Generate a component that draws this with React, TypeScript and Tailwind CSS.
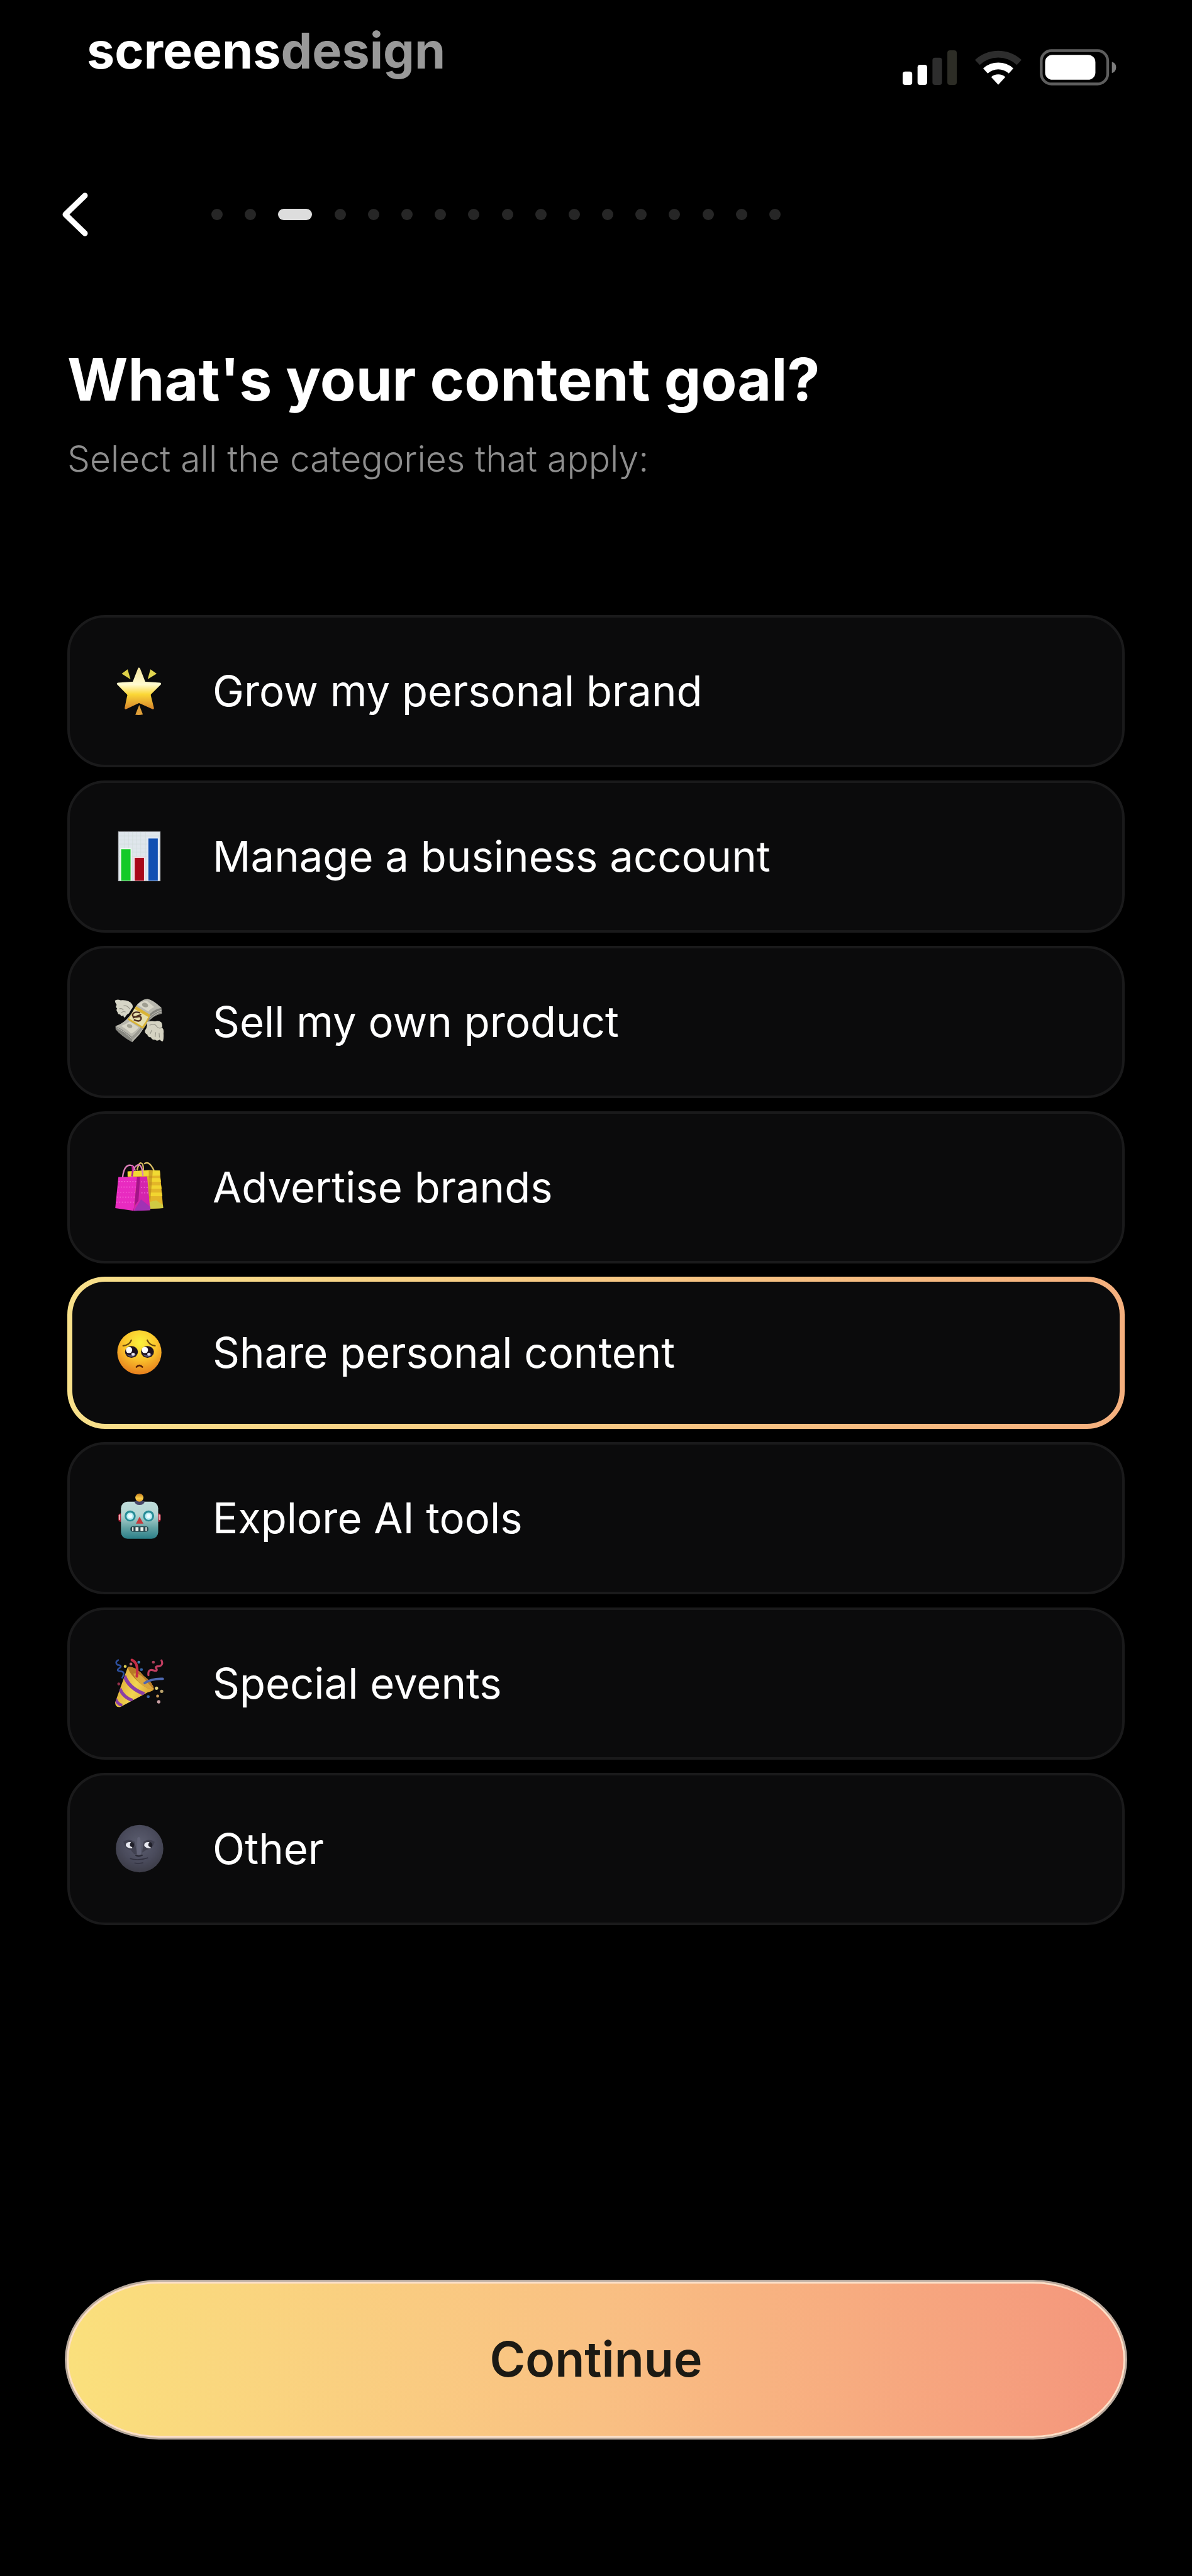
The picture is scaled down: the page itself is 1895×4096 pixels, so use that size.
import { useState } from "react";
import type { ReactNode } from "react";

type Goal = {
  id: string;
  label: string;
  icon: ReactNode;
};

function StarIcon() {
  return (
    <svg viewBox="75 84 280 280" className="size-[82px] shrink-0" aria-hidden="true">
      <defs>
        <linearGradient id="starBody" x1="0" y1="0" x2="0" y2="1">
          <stop offset="0" stopColor="#f7e7a0" />
          <stop offset="0.4" stopColor="#fffbd0" />
          <stop offset="0.65" stopColor="#fbd736" />
          <stop offset="1" stopColor="#d98a2c" />
        </linearGradient>
      </defs>
      <g strokeLinejoin="round">
        <path
          d="M215 102 L243 174 Q246 179 252 179 L329 184 L275 238 Q272 242 273 248 L290 316 L222 285 Q215 281 208 285 L143 316 L157 248 Q158 242 154 238 L101 184 L178 179 Q184 179 187 174 Z"
          fill="url(#starBody)"
          stroke="url(#starBody)"
          strokeWidth="12"
        />
        <path d="M121 129 L153 105 L169 160 Z" fill="#dcd048" />
        <path d="M277 105 L311 129 L262 159 Z" fill="#e2d650" />
        <path d="M216 299 L236 350 Q216 356 195 352 Z" fill="#e0a03a" />
      </g>
    </svg>
  );
}

function ChartIcon() {
  return (
    <svg viewBox="75 84 280 280" className="size-[82px] shrink-0" aria-hidden="true">
      <rect x="103" y="89" width="227" height="267" fill="#dfe6ec" stroke="#b9bcc0" strokeWidth="3" />
      <path
        d="M104 112H329M104 134H329M104 156H329M104 178H329M104 200H329M104 222H329M136 90V355M158 90V355M180 90V355M202 90V355M224 90V355M250 90V355"
        stroke="#cfdad9"
        strokeWidth="2"
      />
      <rect x="112" y="178" width="62" height="177" fill="#eefaf0" />
      <rect x="186" y="225" width="62" height="130" fill="#f8dce4" />
      <rect x="260" y="120" width="62" height="235" fill="#e3ecf8" />
      <rect x="118" y="184" width="51" height="171" fill="#14ca28" />
      <rect x="192" y="231" width="50" height="124" fill="#a80818" />
      <rect x="266" y="126" width="51" height="229" fill="#104fb2" />
    </svg>
  );
}

function MoneyIcon() {
  return (
    <svg viewBox="75 82 280 280" className="size-[82px] shrink-0" aria-hidden="true">
      <path d="M87 246 Q150 225 190 150 Q220 100 262 97 Q290 100 337 145 L339 178 Q295 185 262 225 L216 290 L178 332 Q120 300 88 262 Z" fill="#85857f" />
      <path d="M87 244 Q150 225 188 152 Q220 98 262 97 Q290 102 337 146 Q290 152 257 200 Q220 270 176 303 Q128 262 87 244 Z" fill="#b9b8ae" />
      <path d="M176 303 Q222 270 250 212 L262 225 L216 292 L178 332 Z" fill="#9b9a92" />
      <path d="M92 252 Q135 272 177 312M178 322 Q215 292 235 262M270 200 Q295 170 337 158M275 208 Q300 178 338 168" stroke="#cfcec6" strokeWidth="3" fill="none" />
      <path d="M118 243 Q150 232 165 219 L213 252 Q195 275 173 285 Q150 262 118 243 Z" fill="#d8d6c8" />
      <ellipse cx="164" cy="244" rx="15" ry="10" fill="#a3a294" transform="rotate(20 164 244)" />
      <path d="M205 128 Q228 110 258 108 L298 141 Q275 150 266 166 Z" fill="#d8d6c8" />
      <ellipse cx="248" cy="130" rx="17" ry="12" fill="#a09f92" transform="rotate(20 248 130)" />
      <path d="M199 137 L276 184 Q262 225 237 259 L153 209 Q178 178 199 137 Z" fill="#d9b335" />
      <path d="M190 151 L265 195 Q252 223 233 246 L161 203 Q180 178 190 151 Z" fill="#e6dfae" />
      <path d="M220 172 Q190 162 181 180 Q176 198 204 194 Q230 188 226 206 Q218 226 187 209M227 181 L181 200" fill="none" stroke="#4b2d1e" strokeWidth="8" />
      <path d="M84 106 Q96 96 115 104 Q160 100 178 126 Q186 142 174 152 L160 176 Q148 180 138 199 Q130 196 130 186 Q118 196 112 180 Q102 184 98 168 Q88 154 97 150 Q84 138 94 130 Q84 116 84 106 Z" fill="#d6d5c6" />
      <path d="M131 134 Q152 130 165 152M108 150 Q124 146 130 158M118 172 Q130 162 142 168" fill="none" stroke="#96958a" strokeWidth="4" />
      <path d="M258 222 Q282 214 302 219 Q322 212 336 224 Q344 238 340 252 Q352 264 348 284 Q350 312 345 326 Q336 330 328 318 Q312 330 302 318 Q286 322 280 306 Q262 304 260 290 Q244 282 247 268 Q262 252 258 222 Z" fill="#d5d3c2" />
      <path d="M272 240 Q300 226 312 248 Q330 262 339 250M276 286 L284 266M302 304 L306 278M326 306 L324 282" fill="none" stroke="#98978b" strokeWidth="4" />
    </svg>
  );
}

function BagsIcon() {
  return (
    <svg viewBox="75 80 280 280" className="size-[82px] shrink-0" aria-hidden="true">
      <path d="M153 134 L272 126 L328 129 L346 333 L265 336 L160 320 Z" fill="#e3b528" />
      <path d="M153 134 L272 127 L328 129 L330 156 L153 160 Z" fill="#f1da33" />
      <path d="M270 170H331L334 190H270ZM270 209H335L338 228H270ZM270 248H339L342 268H270Z" fill="#f2d52f" />
      <path d="M270 300 L308 290 L345 316 L346 333 L268 336 Z" fill="#cfca43" />
      <path d="M268 128 L290 128 L276 300 L268 270 Z" fill="#b8841f" opacity="0.6" />
      <path d="M204 128 Q214 84 226 88 Q240 90 238 128M243 92 Q270 72 296 128" fill="none" stroke="#d8bd63" strokeWidth="8" />
      <path d="M103 164 L204 162 L186 347 L86 333 Z" fill="#e82bc0" />
      <path d="M204 162 L259 161 L276 344 L186 347 Z" fill="#d424ad" />
      <path d="M204 162 L221 162 L212 292 L190 322 Z" fill="#a51389" />
      <path d="M188 347 L226 285 L276 326 L276 344 Z" fill="#a032b4" />
      <path d="M104 188H200M101 218H197M98 246H194M95 273H191M92 300H189M226 190H260M226 220H262M228 250H266" stroke="#f66ad8" strokeWidth="5" strokeDasharray="6 9" />
      <path d="M126 165 Q134 96 170 100 Q188 100 194 130M176 165 Q182 110 208 98 Q232 92 236 158" fill="none" stroke="#dc7fb8" strokeWidth="8" />
      <path d="M178 104 Q184 120 177 160" fill="none" stroke="#b81f92" strokeWidth="9" />
    </svg>
  );
}

function PleadingIcon() {
  return (
    <svg viewBox="75 78 280 280" className="size-[82px] shrink-0" aria-hidden="true">
      <defs>
        <radialGradient id="faceFill" cx="0.52" cy="0.28" r="0.75">
          <stop offset="0" stopColor="#fbf23c" />
          <stop offset="0.5" stopColor="#fbc42c" />
          <stop offset="1" stopColor="#e5791c" />
        </radialGradient>
      </defs>
      <circle cx="217" cy="216" r="120" fill="url(#faceFill)" />
      <path d="M129 180 Q162 177 173 150M260 150 Q271 177 302 180" fill="none" stroke="#6d4a0c" strokeWidth="8" strokeLinecap="round" />
      <ellipse cx="174" cy="213" rx="35" ry="32" fill="#1d1220" />
      <ellipse cx="261" cy="213" rx="35" ry="32" fill="#1d1220" />
      <path d="M146 226 Q174 256 203 224 Q180 238 146 226ZM233 226 Q261 256 290 224 Q266 238 233 226Z" fill="#5c5878" />
      <ellipse cx="161" cy="203" rx="17" ry="17" fill="#fff" />
      <ellipse cx="247" cy="203" rx="17" ry="17" fill="#fff" />
      <ellipse cx="183" cy="226" rx="9" ry="8" fill="#e8e4f0" />
      <ellipse cx="269" cy="226" rx="9" ry="8" fill="#e8e4f0" />
      <path d="M201 295 Q217 278 233 295" fill="none" stroke="#5a2107" strokeWidth="9" strokeLinecap="round" />
    </svg>
  );
}

function RobotIcon() {
  return (
    <svg viewBox="75 76 280 280" className="size-[82px] shrink-0" aria-hidden="true">
      <defs>
        <linearGradient id="robotHead" x1="0" y1="0" x2="0" y2="1">
          <stop offset="0" stopColor="#bfdcda" />
          <stop offset="0.35" stopColor="#b5d6d3" />
          <stop offset="0.7" stopColor="#64a3a4" />
          <stop offset="1" stopColor="#2b7f88" />
        </linearGradient>
        <linearGradient id="robotBulb" x1="0" y1="0" x2="0" y2="1">
          <stop offset="0" stopColor="#c47a1c" />
          <stop offset="0.6" stopColor="#fbd04a" />
          <stop offset="1" stopColor="#e8a02c" />
        </linearGradient>
      </defs>
      <rect x="103" y="190" width="230" height="46" rx="12" fill="#a81c30" />
      <rect x="105" y="196" width="8" height="30" rx="4" fill="#f0a0ac" />
      <rect x="323" y="196" width="8" height="30" rx="4" fill="#f0a0ac" />
      <rect x="117" y="126" width="202" height="202" rx="36" fill="url(#robotHead)" />
      <path d="M190 126 Q196 144 218 144 Q240 144 246 126 Q218 112 190 126Z" fill="#474768" />
      <circle cx="217" cy="104" r="22" fill="url(#robotBulb)" />
      <circle cx="167" cy="204" r="30" fill="#278c96" />
      <circle cx="267" cy="204" r="30" fill="#278c96" />
      <circle cx="167" cy="205" r="20" fill="#b9edf5" />
      <circle cx="267" cy="205" r="20" fill="#b9edf5" />
      <circle cx="167" cy="205" r="11" fill="#effdff" />
      <circle cx="267" cy="205" r="11" fill="#effdff" />
      <path d="M218 208 L239 246 H198 Z" fill="#c4393c" />
      <rect x="168" y="260" width="98" height="30" rx="14" fill="#26474e" />
      <path d="M178 265H185V285H178ZM196 265H212V285H196ZM223 265H239V285H223ZM250 265H257V285H250Z" fill="#e9efe9" />
    </svg>
  );
}

function PartyIcon() {
  return (
    <svg viewBox="75 74 280 280" className="size-[82px] shrink-0" aria-hidden="true">
      <defs>
        <linearGradient id="cone" x1="0" y1="0.3" x2="1" y2="0.7">
          <stop offset="0" stopColor="#d9a22e" />
          <stop offset="0.5" stopColor="#f2d552" />
          <stop offset="1" stopColor="#d4962a" />
        </linearGradient>
        <clipPath id="coneClip">
          <path d="M154 124 Q195 118 240 172 Q292 210 296 244 Q290 256 262 262 L112 342 Q88 344 85 318 Z" />
        </clipPath>
      </defs>
      <g clipPath="url(#coneClip)">
        <rect x="80" y="110" width="230" height="240" fill="url(#cone)" />
        <path d="M136 172 Q160 240 244 270" fill="none" stroke="#8b3fa6" strokeWidth="19" />
        <path d="M110 240 Q130 290 182 306" fill="none" stroke="#8b3fa6" strokeWidth="18" />
        <path d="M88 296 Q96 325 124 332" fill="none" stroke="#8b3fa6" strokeWidth="16" />
      </g>
      <path d="M154 124 Q190 116 240 172 Q292 210 296 244 Q270 252 220 212 Q160 160 154 124 Z" fill="#b77a26" />
      <path d="M184 160 Q220 150 262 210 Q282 232 296 244 Q262 248 220 212 Q196 190 184 160Z" fill="#d9a63c" />
      <g fill="none" strokeLinecap="round">
        <path d="M176 86 Q214 100 203 175" stroke="#c62d46" strokeWidth="14" />
        <path d="M246 211 Q280 188 344 188" stroke="#4e68b0" strokeWidth="13" />
        <path d="M102 86 Q82 98 98 112 Q128 116 108 130 Q86 146 118 148 Q142 150 124 182" stroke="#2d4f9c" strokeWidth="9" />
        <path d="M337 88 Q348 112 326 120 Q298 120 310 134 Q316 150 294 142 Q262 132 266 168" stroke="#c03d60" strokeWidth="11" />
      </g>
      <circle cx="140" cy="121" r="8" fill="#e0cf50" />
      <circle cx="171" cy="108" r="8" fill="#c0606c" />
      <circle cx="214" cy="98" r="8" fill="#3d7cb6" />
      <circle cx="228" cy="138" r="8" fill="#3766a8" />
      <circle cx="293" cy="98" r="8" fill="#ad3f5a" />
      <circle cx="105" cy="216" r="8" fill="#93304a" />
      <circle cx="310" cy="239" r="9" fill="#dfd07a" />
      <circle cx="338" cy="256" r="9" fill="#b9a26c" />
      <circle cx="316" cy="282" r="8" fill="#cc9c5a" />
      <circle cx="322" cy="313" r="9" fill="#caa0a4" />
      <circle cx="265" cy="285" r="8" fill="#3d65a8" />
    </svg>
  );
}

function MoonIcon() {
  return (
    <svg viewBox="75 70 280 280" className="size-[82px] shrink-0" aria-hidden="true">
      <defs>
        <radialGradient id="moonFill" cx="0.5" cy="0.4" r="0.62">
          <stop offset="0" stopColor="#5c5e70" />
          <stop offset="0.6" stopColor="#4a4b5c" />
          <stop offset="1" stopColor="#3b3b46" />
        </radialGradient>
      </defs>
      <circle cx="218" cy="208" r="129" fill="url(#moonFill)" />
      <path d="M130 170 Q160 150 192 172 L204 236 Q190 248 170 214 Q140 214 130 170ZM240 170 Q270 150 300 172 Q290 210 256 214 L232 230 Z" fill="#3b3b49" opacity="0.7" />
      <path d="M206 150 Q214 140 222 150 L226 238 Q214 246 203 238 Z" fill="#66687c" opacity="0.7" />
      <ellipse cx="168" cy="189" rx="21" ry="18" fill="#20202a" />
      <ellipse cx="267" cy="189" rx="21" ry="18" fill="#20202a" />
      <path d="M172 173 Q144 170 143 190 Q148 206 176 207 Q184 200 170 197 Q160 186 172 173ZM272 173 Q244 170 243 190 Q248 206 276 207 Q284 200 270 197 Q260 186 272 173Z" fill="#e9eaf2" />
      <path d="M196 244 Q215 254 234 243" fill="none" stroke="#282834" strokeWidth="7" />
      <path d="M166 262 Q214 276 264 258" fill="none" stroke="#30303e" strokeWidth="5" />
      <path d="M190 286 Q214 292 238 285" fill="none" stroke="#353544" strokeWidth="6" />
    </svg>
  );
}

function StatusIcons() {
  return (
    <div className="mt-9 flex items-center gap-[29px]">
      <svg viewBox="168 122 294 188" className="h-[55px] w-[86px]" aria-hidden="true">
        <rect x="168" y="237" width="52" height="73" rx="14" fill="#fff" />
        <rect x="249" y="201" width="52" height="109" rx="14" fill="#fff" />
        <rect x="330" y="162" width="52" height="148" rx="14" fill="#2d2d2d" />
        <rect x="411" y="122" width="51" height="188" rx="14" fill="#2d2d26" />
      </svg>
      <svg viewBox="558 122 256 188" className="h-[55px] w-[74px]" aria-hidden="true">
        <path d="M558 174 A188 188 0 0 1 814 174 L788 201 A150 150 0 0 0 584 201 Z" fill="#2d2d2d" />
        <path d="M603 220 A124 124 0 0 1 769 220 L744 248 A86 86 0 0 0 628 248 Z" fill="#fff" />
        <path d="M647 268 A60 60 0 0 1 725 268 L686 310 Z" fill="#fff" />
      </svg>
      <svg viewBox="911 116 418 198" className="h-[58px] w-[122px]" aria-hidden="true">
        <rect x="919" y="124" width="362" height="182" rx="56" fill="none" stroke="#5e5e5e" strokeWidth="15" />
        <rect x="940" y="147" width="274" height="136" rx="40" fill="#fff" />
        <path d="M1304 185 Q1327 193 1327 215 Q1327 238 1304 247 Z" fill="#7c7c7c" />
      </svg>
    </div>
  );
}

const goals: Goal[] = [
  { id: "brand", label: "Grow my personal brand", icon: <StarIcon /> },
  { id: "business", label: "Manage a business account", icon: <ChartIcon /> },
  { id: "product", label: "Sell my own product", icon: <MoneyIcon /> },
  { id: "advertise", label: "Advertise brands", icon: <BagsIcon /> },
  { id: "personal", label: "Share personal content", icon: <PleadingIcon /> },
  { id: "ai", label: "Explore AI tools", icon: <RobotIcon /> },
  { id: "events", label: "Special events", icon: <PartyIcon /> },
  { id: "other", label: "Other", icon: <MoonIcon /> },
];

const TOTAL_STEPS = 17;
const CURRENT_STEP = 2;

export default function App() {
  const [selected, setSelected] = useState<string[]>(["personal"]);

  function toggle(id: string) {
    setSelected((prev) =>
      prev.includes(id) ? prev.filter((item) => item !== id) : [...prev, id]
    );
  }

  return (
    <div className="flex min-h-screen flex-col bg-black font-['Inter',sans-serif] text-white">
      <header className="flex items-start justify-between pt-[42px] pr-[120px] pl-[138px]">
        <p className="text-[79px] leading-[77px] font-bold">
          screens<span className="text-[#999999]">design</span>
        </p>
        <StatusIcons />
      </header>

      <nav className="mt-[170px] flex items-center pl-[98px]">
        <button type="button" aria-label="Back" className="shrink-0">
          <svg viewBox="0 0 42 70" className="h-[70px] w-[42px]" fill="none" aria-hidden="true">
            <path d="M37 5 L6 35 L37 65" stroke="#fff" strokeWidth="9" strokeLinecap="round" strokeLinejoin="round" />
          </svg>
        </button>
        <div className="ml-[196px] flex w-[905px] items-center justify-between">
          {Array.from({ length: TOTAL_STEPS }, (_, index) => (
            <span
              key={index}
              className={
                index === CURRENT_STEP
                  ? "h-[18px] w-[54px] rounded-full bg-[#dddddd]"
                  : "size-[18px] rounded-full bg-[#262626]"
              }
            />
          ))}
        </div>
      </nav>

      <main className="mt-[171px] flex flex-1 flex-col px-[107px]">
        <h1 className="text-[93px] leading-[112px] font-bold">
          What's your content goal?
        </h1>
        <p className="mt-[35px] text-[57px] leading-[72px] font-light text-[#8e8e8e]">
          Select all the categories that apply:
        </p>

        <div className="mt-[212px] flex flex-col gap-[21px]">
          {goals.map((goal) => (
            <label
              key={goal.id}
              className={`flex h-[242px] cursor-pointer items-center gap-[76px] rounded-[60px] text-[67px] ${
                selected.includes(goal.id)
                  ? "border-[8px] border-transparent px-[65px] [background:linear-gradient(#0b0b0c,#0b0b0c)_padding-box,linear-gradient(90deg,#f8e08a,#f5b07e)_border-box]"
                  : "border-[4px] border-[#1a1a1b] bg-[#0b0b0c] px-[69px]"
              }`}
            >
              <input
                type="checkbox"
                className="sr-only"
                checked={selected.includes(goal.id)}
                onChange={() => toggle(goal.id)}
              />
              {goal.icon}
              {goal.label}
            </label>
          ))}
        </div>
      </main>

      <footer className="px-[103px] pb-[217px]">
        <button
          type="button"
          className="h-[254px] w-full rounded-[150px/127px] border-[3px] border-[#b9aa9e] bg-linear-to-r from-[#fae07c] via-[#f9c083] to-[#f4957c] text-[77px] font-semibold text-[#1c1a14] shadow-[inset_0_0_0_3px_#fde0c8]"
        >
          Continue
        </button>
      </footer>
    </div>
  );
}
